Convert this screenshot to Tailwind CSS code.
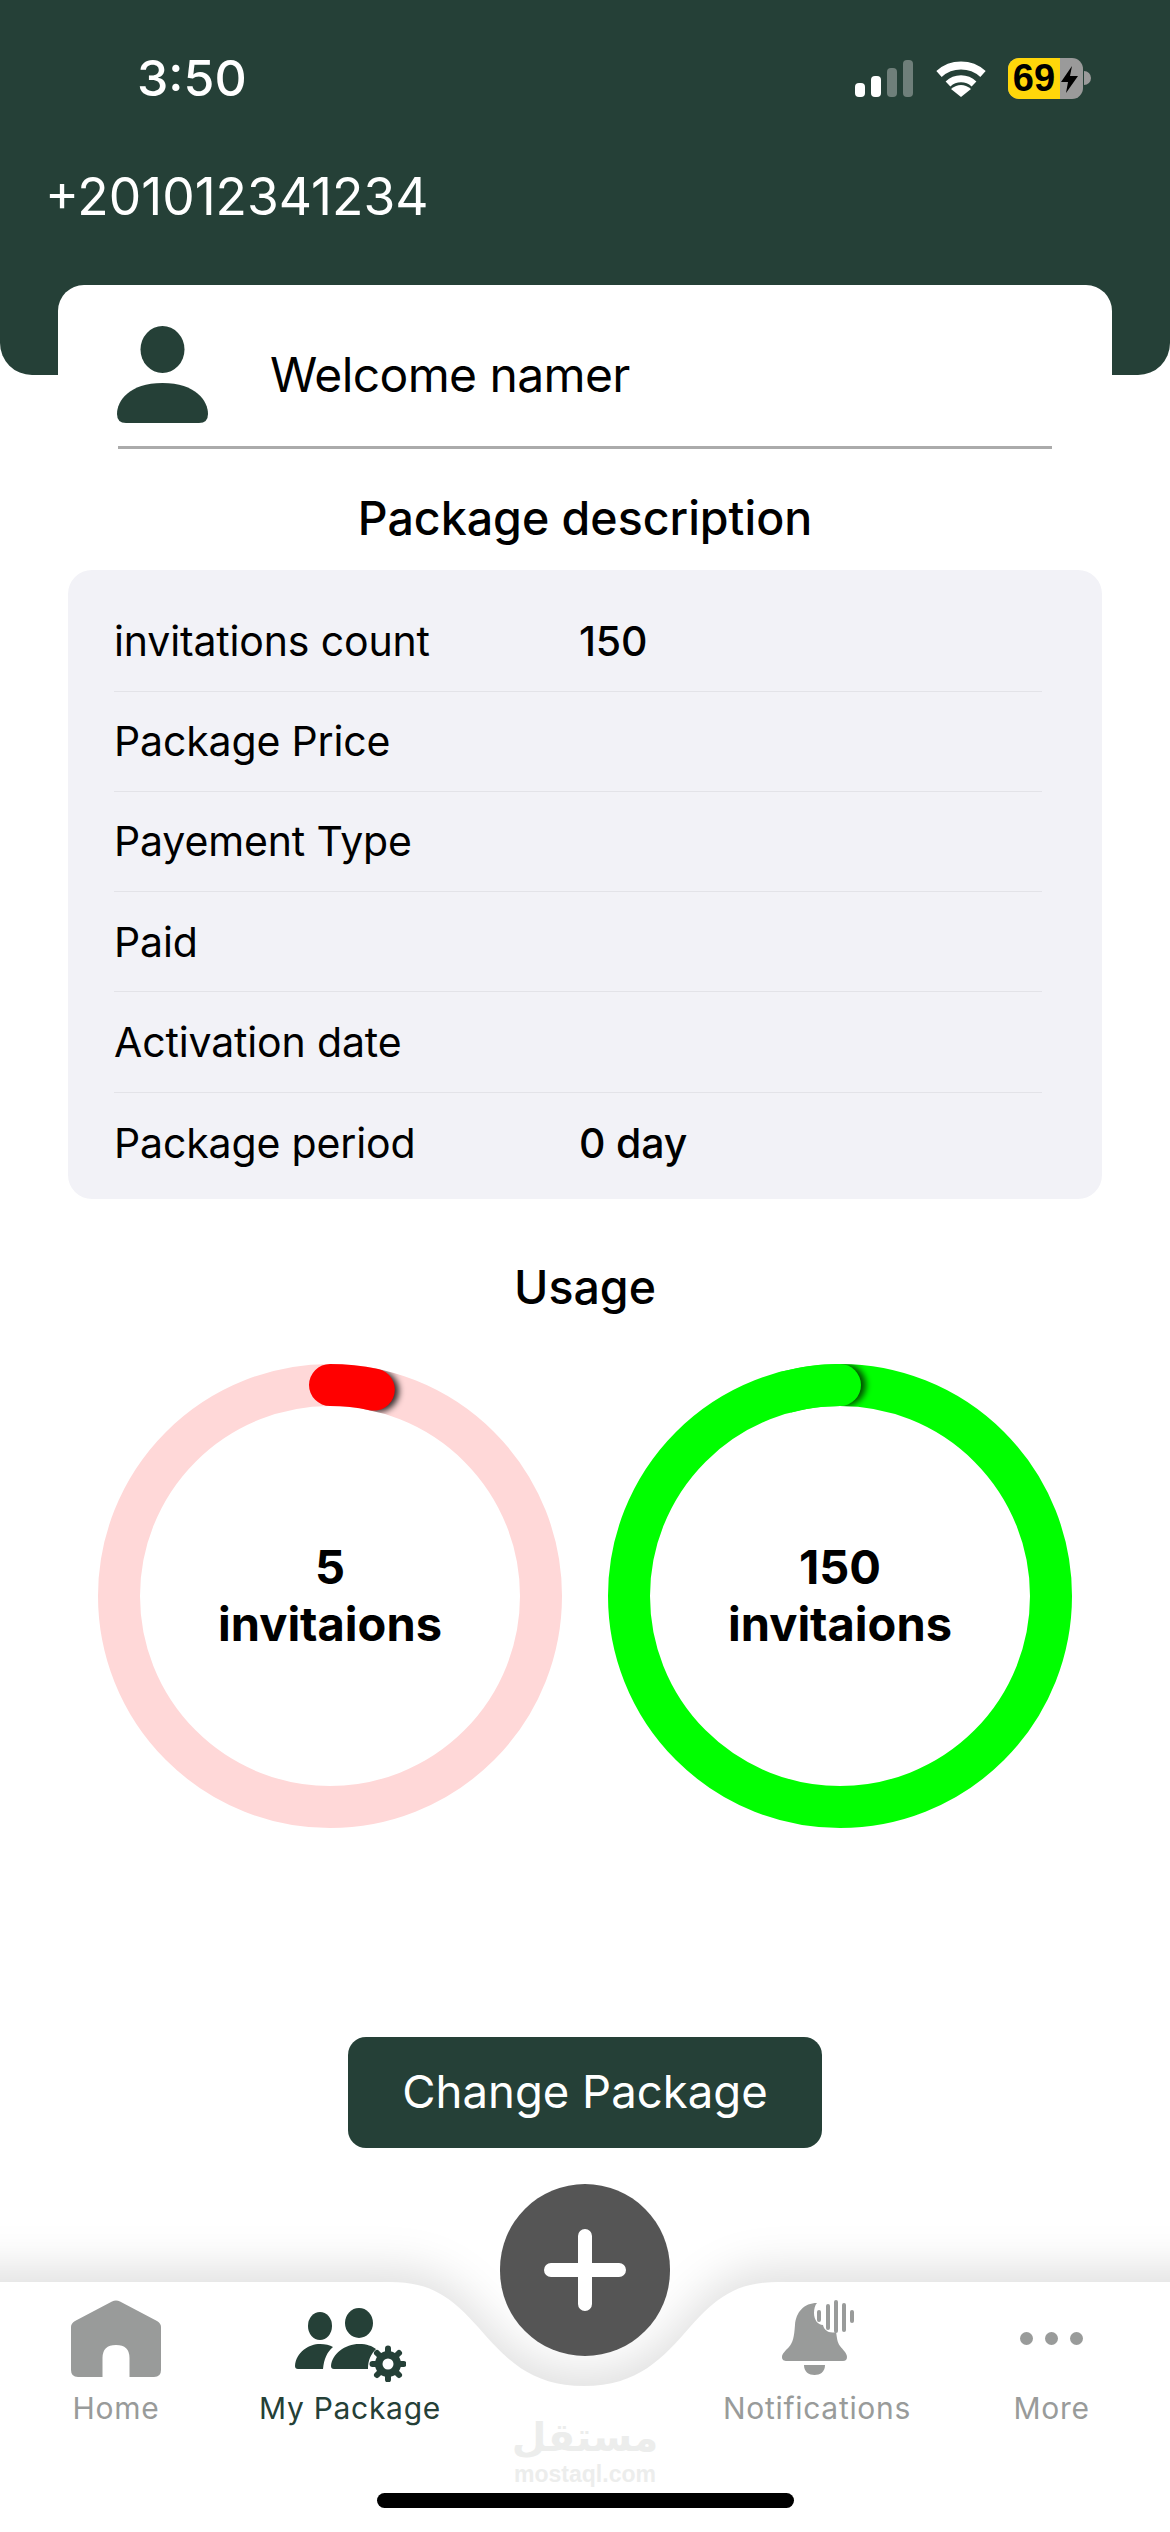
<!DOCTYPE html>
<html lang="en">
<head>
    <meta charset="UTF-8">
    <meta name="viewport" content="width=device-width, initial-scale=1.0">
    <title>My Package</title>
    <script src="https://cdn.jsdelivr.net/npm/@tailwindcss/browser@4"></script>
</head>
<body class="bg-white font-[family-name:Inter,sans-serif] text-black">
<div class="relative w-[1170px] h-[2532px] overflow-hidden flex flex-col bg-white">

    <!-- Header -->
    <header class="h-[375px] shrink-0 bg-[#254037] rounded-b-[32px] text-white">
        <div class="flex items-center justify-between h-[56px] mt-[50px] pl-[137px] pr-[79px]">
            <span class="text-[50px] leading-[56px] font-medium">3:50</span>
            <div class="flex items-center">
                <svg class="w-[58px] h-[37px]" viewBox="0 0 58 37">
                    <rect x="0" y="23" width="10" height="14" rx="4" fill="#fff"/>
                    <rect x="16" y="16" width="10" height="21" rx="4" fill="#fff"/>
                    <rect x="32" y="8" width="10" height="29" rx="4" fill="#6f7f7a"/>
                    <rect x="48" y="0" width="10" height="37" rx="4" fill="#6f7f7a"/>
                </svg>
                <svg class="w-[50px] h-[37px] ml-[23px]" viewBox="0 0 50 37" fill="none" stroke="#fff">
                    <path d="M3 14 A33 33 0 0 1 47 14" stroke-width="8"/>
                    <path d="M12 24 A19 19 0 0 1 38 24" stroke-width="7"/>
                    <path d="M25 37 L15 29 Q25 21 35 29 Z" fill="#fff" stroke="none"/>
                </svg>
                <div class="relative flex ml-[22px] w-[75px] h-[41px] rounded-[11px] overflow-hidden bg-[#9a9a9a]">
                    <div class="w-[52px] h-full bg-[#ffd60a] flex items-center justify-center text-black text-[38px] font-bold font-[family-name:'Liberation_Sans',sans-serif]">69</div>
                    <svg class="w-[17px] h-[27px] mt-[8px] ml-[1px]" viewBox="0 0 17 27"><path d="M11 0 L0 16 H7 L5 27 L17 10 H9 Z" fill="#000"/></svg>
                </div>
                <svg class="w-[7px] h-[14px] ml-[1px]" viewBox="0 0 7 14"><path d="M0 0 A7 7 0 0 1 0 14 Z" fill="#9a9a9a"/></svg>
            </div>
        </div>
        <div class="mt-[60px] pl-[45px] text-[51.5px] leading-[60px]">+201012341234</div>
    </header>

    <!-- Welcome card -->
    <section class="relative -mt-[90px] mx-[58px] bg-white rounded-t-[26px] shrink-0">
        <div class="flex items-center pt-[41px] pl-[59px]">
            <svg class="w-[91px] h-[97px]" viewBox="0 0 91 97" fill="#254037">
                <ellipse cx="45.5" cy="23.5" rx="22" ry="23.5"/>
                <path d="M0 88 C0 75 12 57 45.5 57 C79 57 91 75 91 88 Q91 97 82 97 H9 Q0 97 0 88 Z"/>
            </svg>
            <span class="ml-[62px] text-[48px] leading-[60px] tracking-[-0.6px]">Welcome namer</span>
        </div>
        <div class="mx-[60px] mt-[23px] h-[3px] bg-[#ababab]"></div>
    </section>

    <!-- Package description -->
    <h2 class="mt-[39px] text-center text-[46.5px] leading-[60px] font-medium">Package description</h2>
    <div class="mt-[22px] mx-[68px] h-[629px] rounded-[24px] bg-[#f2f2f7] pt-[22px] pl-[46px] pr-[60px] text-[41px] leading-[48px] tracking-[-0.15px]">
        <div class="flex items-center h-[100px] pb-[2px] border-b border-[#e3e3e8]"><span class="w-[465px]">invitations count</span><span class="font-medium">150</span></div>
        <div class="flex items-center h-[100px] pb-[2px] border-b border-[#e3e3e8]"><span class="w-[465px]">Package Price</span></div>
        <div class="flex items-center h-[100px] pb-[2px] border-b border-[#e3e3e8]"><span class="w-[465px]">Payement Type</span></div>
        <div class="flex items-center h-[100px] border-b border-[#e3e3e8]"><span class="w-[465px]">Paid</span></div>
        <div class="flex items-center h-[101px] border-b border-[#e3e3e8]"><span class="w-[465px]">Activation date</span></div>
        <div class="flex items-center h-[100px]"><span class="w-[465px]">Package period</span><span class="font-medium">0 day</span></div>
    </div>

    <!-- Usage -->
    <h2 class="mt-[58px] text-center text-[46.5px] leading-[60px] font-medium">Usage</h2>
    <div class="mt-[47px] flex justify-center gap-[46px]">
        <div class="relative w-[464px] h-[464px]">
            <svg class="w-full h-full" viewBox="0 0 464 464" fill="none">
                <mask id="ringA" maskUnits="userSpaceOnUse" x="0" y="0" width="464" height="464"><circle cx="232" cy="232" r="211" stroke="#fff" stroke-width="42"/></mask>
                <circle cx="232" cy="232" r="211" stroke="#ffd8d8" stroke-width="42"/>
                <g mask="url(#ringA)"><circle cx="280" cy="27" r="21" fill="#000" fill-opacity="0.8" class="blur-[3px]"/></g>
                <circle cx="232" cy="232" r="211" stroke="#ff0000" stroke-width="42" stroke-linecap="round" stroke-dasharray="44.2 1400" transform="rotate(-90 232 232)"/>
            </svg>
            <div class="absolute inset-0 flex flex-col items-center justify-center text-center text-[47px] leading-[57px] font-bold pb-[2px]">
                <span>5</span>
                <span>invitaions</span>
            </div>
        </div>
        <div class="relative w-[464px] h-[464px]">
            <svg class="w-full h-full" viewBox="0 0 464 464" fill="none">
                <mask id="ringB" maskUnits="userSpaceOnUse" x="0" y="0" width="464" height="464"><circle cx="232" cy="232" r="211" stroke="#fff" stroke-width="42"/></mask>
                <circle cx="232" cy="232" r="211" stroke="#00ff00" stroke-width="42"/>
                <g mask="url(#ringB)"><circle cx="237" cy="21" r="21" fill="#000" fill-opacity="0.7" class="blur-[3px]"/></g>
                <path d="M177.4 28.2 A211 211 0 0 1 232 21" stroke="#00ff00" stroke-width="42"/>
                <circle cx="232" cy="21" r="21" fill="#00ff00"/>
            </svg>
            <div class="absolute inset-0 flex flex-col items-center justify-center text-center text-[47px] leading-[57px] font-bold pb-[2px]">
                <span>150</span>
                <span>invitaions</span>
            </div>
        </div>
    </div>

    <button class="mt-[209px] mx-auto w-[474px] h-[111px] shrink-0 rounded-[18px] bg-[#254037] text-white text-[45.5px]">Change Package</button>

    <!-- Tab bar -->
    <footer class="relative mt-auto h-[250px] shrink-0">
        <svg class="absolute left-0 top-0 w-[1170px] h-[250px] overflow-visible" viewBox="0 0 1170 250">
            <path class="drop-shadow-[0_-14px_22px_rgba(0,0,0,0.12)]" fill="#fff" d="M-60 0 H390 C432 0 452 16 478 45 C505 76 530 104 584 104 C638 104 663 76 690 45 C716 16 736 0 778 0 H1230 V300 H-60 Z"/>
        </svg>

        <div class="relative grid grid-cols-[232px_236px_233px_232px_237px] pt-[18px] text-[30px] leading-[36px] tracking-[0.7px] text-[#999b9a]">
            <a class="flex flex-col items-center">
                <div class="h-[90px] flex items-start">
                    <svg class="w-[90px] h-[77px]" viewBox="0 0 90 77" fill="#999b9a"><path d="M41 1.5 Q45 -0.5 49 1.5 L86 21 Q90 23.5 90 27 V70 Q90 77 83 77 H58.5 V58 Q58.5 45 45 45 Q31.5 45 31.5 58 V77 H7 Q0 77 0 70 V27 Q0 23.5 4 21 Z"/></svg>
                </div>
                <span>Home</span>
            </a>
            <a class="flex flex-col items-center text-[#254037]">
                <div class="h-[90px] flex items-start pt-[8px]">
                    <svg class="w-[111px] h-[74px]" viewBox="0 0 111 74" fill="#254037">
                        <ellipse cx="25" cy="18" rx="12" ry="14"/>
                        <ellipse cx="64" cy="15" rx="14" ry="15"/>
                        <path d="M0 58 C1 44 14 36 25 36 C30 36 35 37 38 39 C32 44 29 51 28 61 H3 Q0 61 0 58 Z"/>
                        <path d="M36 58 C37 46 50 36 64 36 C72 36 77 38 81 41 C76 46 73 52 73 61 H39 Q36 61 36 58 Z"/>
                        <circle cx="93" cy="56" r="13"/>
                        <g stroke="#254037" stroke-width="6" stroke-linecap="round">
                            <path d="M93 40.5 V71.5"/>
                            <path d="M77.5 56 H108.5"/>
                            <path d="M82 45 L104 67"/>
                            <path d="M82 67 L104 45"/>
                        </g>
                        <circle cx="93" cy="56" r="5.5" fill="#fff"/>
                    </svg>
                </div>
                <span>My Package</span>
            </a>
            <div></div>
            <a class="flex flex-col items-center">
                <div class="h-[90px] flex items-start">
                    <svg class="w-[76px] h-[77px] ml-[6px]" viewBox="0 0 76 77" fill="#999b9a">
                        <path d="M35 3 C22 3 14 12 13 25 C12 38 11 42 7 47 C3 51 0 54 0 57 C0 60 2 61 5 61 H61 Q65 61 65 57 C65 53 61 50 58 46 C55 42 55 37 54 32 C47 34 42 30 41 25 C36 25 32 20 32 13 C32 9 33 5 35 3 Z"/>
                        <path d="M22 65 H43 C43 72 38 75 32.5 75 C27 75 22 72 22 65 Z"/>
                        <rect x="35" y="10" width="4" height="12" rx="2"/>
                        <rect x="44" y="4" width="4" height="26" rx="2"/>
                        <rect x="52" y="0" width="4" height="33" rx="2"/>
                        <rect x="60" y="3" width="4" height="29" rx="2"/>
                        <rect x="68" y="10" width="4" height="13" rx="2"/>
                    </svg>
                </div>
                <span>Notifications</span>
            </a>
            <a class="flex flex-col items-center">
                <div class="h-[90px] flex items-start pt-[32px] gap-[12px]">
                    <span class="w-[13px] h-[13px] rounded-full bg-[#999b9a]"></span>
                    <span class="w-[13px] h-[13px] rounded-full bg-[#999b9a]"></span>
                    <span class="w-[13px] h-[13px] rounded-full bg-[#999b9a]"></span>
                </div>
                <span>More</span>
            </a>
        </div>

        <!-- Floating add button -->
        <div class="absolute left-[500px] top-[-98px] w-[170px] h-[172px] rounded-full bg-[#555555] flex items-center justify-center">
            <svg class="w-[82px] h-[82px]" viewBox="0 0 82 82" stroke="#fff" stroke-width="14" stroke-linecap="round"><path d="M41 7 V75 M7 41 H75"/></svg>
        </div>

        <!-- Watermark -->
        <div class="absolute left-[515px] top-[130px] w-[140px] flex flex-col items-center text-[#ecedec] font-bold">
            <span dir="rtl" class="font-[family-name:'DejaVu_Sans',sans-serif] text-[40px] leading-[50px]">مستقل</span>
            <span class="font-[family-name:'Liberation_Sans',sans-serif] text-[23px] leading-[24px]">mostaql.com</span>
        </div>

        <!-- Home indicator -->
        <div class="absolute left-[377px] top-[211px] w-[417px] h-[15px] rounded-full bg-black"></div>
    </footer>
</div>
</body>
</html>
